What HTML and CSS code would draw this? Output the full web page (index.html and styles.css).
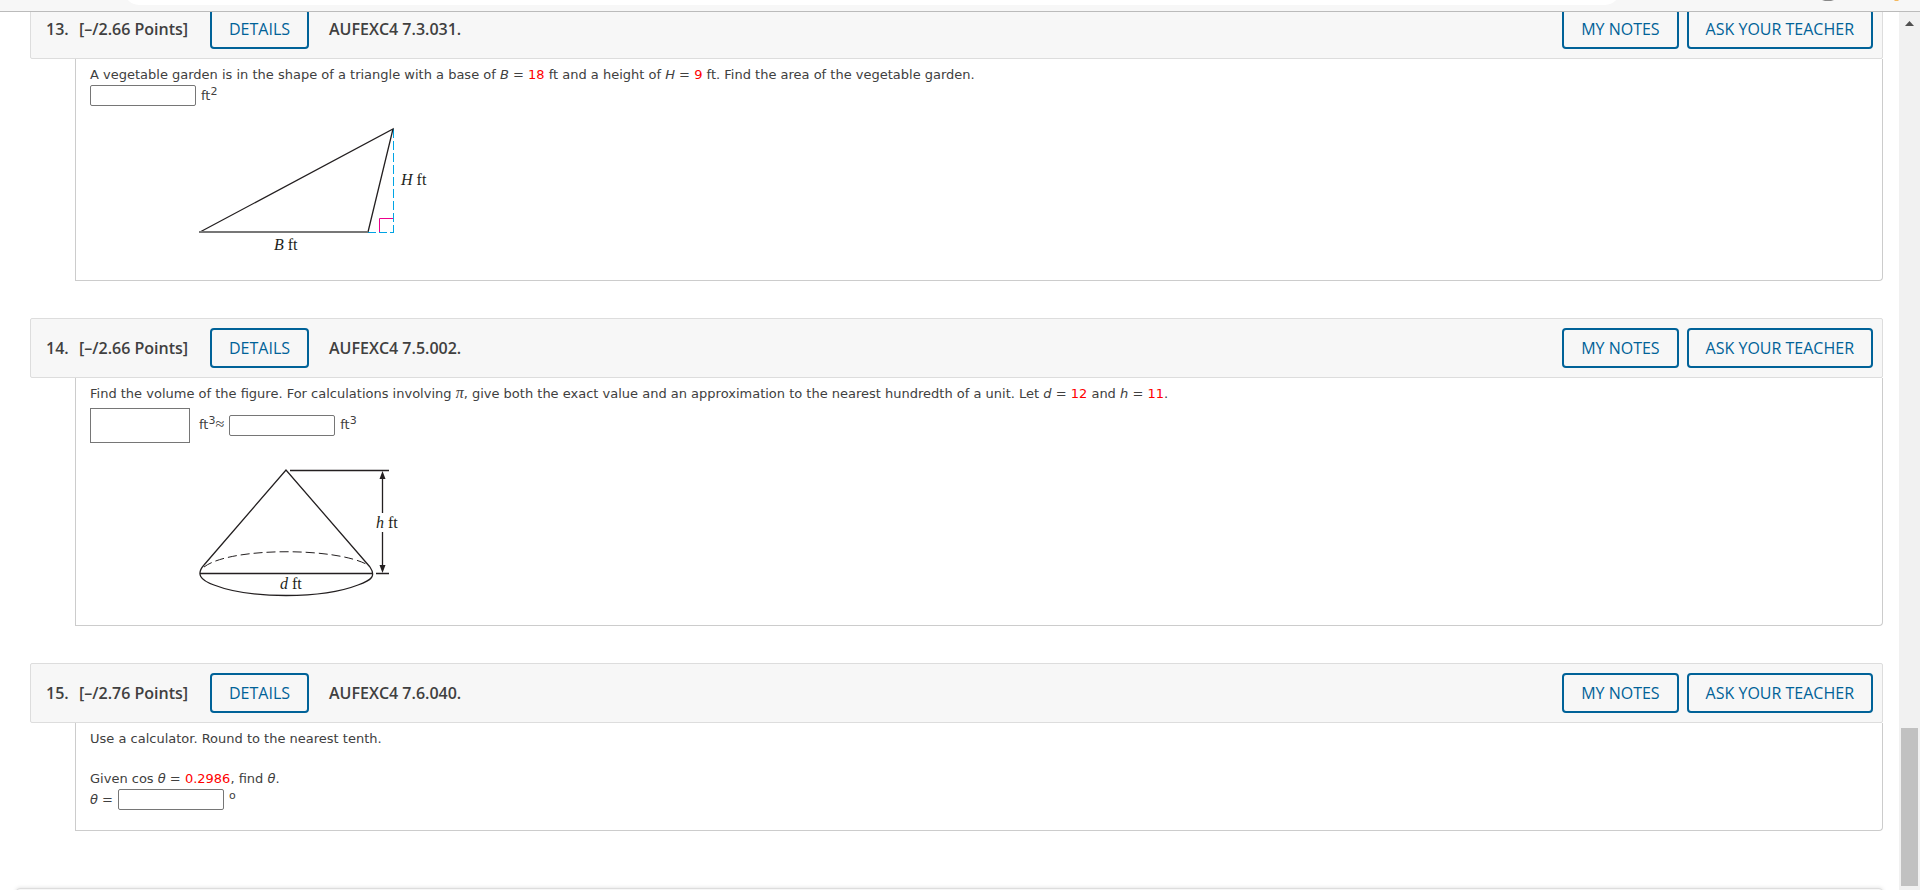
FILE: index.html
```
<!DOCTYPE html>
<html lang="en">
<head>
  <meta charset="UTF-8">
  <meta name="viewport" content="width=device-width, initial-scale=1.0">
  <title>Assignment</title>
  <link rel="stylesheet" href="styles.css">
</head>
<body>
  <div class="toolbar">
    <div class="address-pill"></div>
    <svg class="toolbar-icons" width="80" height="2" viewBox="0 0 80 2">
      <path d="M0 0h12l-3 1h-6z" fill="#888"/>
      <path d="M72 0h5l-1 1h-3z" fill="#f5b95f"/>
    </svg>
  </div>

  <div class="viewport">
    <main class="assignment">
      <section class="question">
        <header class="question-header">
          <span class="number">13.</span>
          <span class="points">[–/2.66 Points]</span>
          <button class="btn details">DETAILS</button>
          <span class="source">AUFEXC4 7.3.031.</span>
          <div class="actions">
            <button class="btn">MY NOTES</button>
            <button class="btn">ASK YOUR TEACHER</button>
          </div>
        </header>
        <div class="question-body">
          <p>A vegetable garden is in the shape of a triangle with a base of <i>B</i> = <span class="value">18</span> ft and a height of <i>H</i> = <span class="value">9</span> ft. Find the area of the vegetable garden.</p>
          <div class="answer-row">
            <input type="text" class="answer" id="area">
            <label for="area">ft<sup>2</sup></label>
          </div>
          <svg class="figure" width="280" height="150" viewBox="0 0 280 150">
            <path class="height" d="M213.500 19V122" stroke-dasharray="9 3"/>
            <path class="height" d="M188 122.500H214" stroke-dasharray="8 3"/>
            <path class="angle" d="M199.500 122V108.500H213"/>
            <path class="line" d="M20 122L213 19L188 122"/>
            <path class="line base" d="M19 122H188"/>
            <text x="221" y="75"><tspan class="var">H</tspan> ft</text>
            <text x="94" y="140"><tspan class="var">B</tspan> ft</text>
          </svg>
        </div>
      </section>

      <section class="question">
        <header class="question-header">
          <span class="number">14.</span>
          <span class="points">[–/2.66 Points]</span>
          <button class="btn details">DETAILS</button>
          <span class="source">AUFEXC4 7.5.002.</span>
          <div class="actions">
            <button class="btn">MY NOTES</button>
            <button class="btn">ASK YOUR TEACHER</button>
          </div>
        </header>
        <div class="question-body">
          <p>Find the volume of the figure. For calculations involving <i class="greek">π</i>, give both the exact value and an approximation to the nearest hundredth of a unit. Let <i>d</i> = <span class="value">12</span> and <i>h</i> = <span class="value">11</span>.</p>
          <div class="answer-row exact-row">
            <input type="text" class="answer exact" id="exact">
            <label for="exact" class="exact-label">ft<sup>3</sup><span class="approx">≈</span></label>
            <input type="text" class="answer" id="approx">
            <label for="approx">ft<sup>3</sup></label>
          </div>
          <svg class="figure" width="280" height="155" viewBox="0 0 280 155">
            <path class="line" d="M24 115L106 20L190 117"/>
            <path class="line" d="M24 115C16 124 20 130 34 135C70 149 142 149 178 135C192 130 196 126 190 117"/>
            <path class="line" d="M20 123.500H193M110 20.500H209M196 123.500H209"/>
            <path class="line hidden-edge" d="M24 117C50 97 156 97 188 115"/>
            <path class="line" d="M202.500 24V63M202.500 82V120"/>
            <path class="arrow" d="M202.500 21L205.500 29H199.500zM202.500 123L205.500 115H199.500z"/>
            <text x="196" y="78"><tspan class="var">h</tspan><tspan dx="4">ft</tspan></text>
            <text x="100" y="139"><tspan class="var">d</tspan><tspan dx="4">ft</tspan></text>
          </svg>
        </div>
      </section>

      <section class="question">
        <header class="question-header">
          <span class="number">15.</span>
          <span class="points">[–/2.76 Points]</span>
          <button class="btn details">DETAILS</button>
          <span class="source">AUFEXC4 7.6.040.</span>
          <div class="actions">
            <button class="btn">MY NOTES</button>
            <button class="btn">ASK YOUR TEACHER</button>
          </div>
        </header>
        <div class="question-body">
          <p>Use a calculator. Round to the nearest tenth.</p>
          <p class="given">Given cos <i>θ</i> = <span class="value">0.2986</span>, find <i>θ</i>.</p>
          <div class="answer-row">
            <label for="theta"><i>θ</i> =</label>
            <input type="text" class="answer" id="theta">
            <span><sup>o</sup></span>
          </div>
        </div>
      </section>

      <div class="submit-panel"></div>
    </main>

    <div class="scrollbar">
      <svg class="scroll-arrow" width="9" height="5" viewBox="0 0 9 5"><path d="M0 5L4.500 0L9 5z"/></svg>
      <div class="thumb"></div>
    </div>
  </div>
</body>
</html>
```
FILE: styles.css
```
* {
  box-sizing: border-box;
}

body {
  margin: 0;
  height: 100vh;
  display: flex;
  flex-direction: column;
  overflow: hidden;
  background-color: #fff;
  color: #404040;
  font-family: Verdana, "DejaVu Sans", sans-serif;
  font-size: 13px;
  line-height: 20px;
}

/* browser edge */
.toolbar {
  flex: none;
  display: flex;
  align-items: flex-start;
  height: 12px;
  padding-left: 124px;
  overflow: hidden;
  background-color: #f7f7f7;
  border-bottom: 1px solid #bbb;
}

.address-pill {
  flex: 1;
  height: 30px;
  margin-top: -25px;
  margin-right: 202px;
  background-color: #fff;
  border-radius: 15px;
}

.toolbar-icons {
  margin-right: 18px;
}

.viewport {
  flex: 1;
  display: flex;
  min-height: 0;
}

/* the list is scrolled so the first header starts above the fold */
.assignment {
  flex: 1;
  overflow: hidden;
  padding: 0 16px 0 30px;
}

.question {
  margin-bottom: 37px;
}

.question:first-child {
  margin-top: -13px;
}

.question-header {
  display: flex;
  align-items: center;
  height: 60px;
  padding: 0 9px 0 15px;
  background-color: #f7f7f7;
  border: 1px solid #ddd;
  border-radius: 2px;
  font-family: "Open Sans", sans-serif;
  font-size: 16px;
  font-weight: 600;
}

.number {
  width: 33px;
}

.points {
  width: 131px;
}

.source {
  margin-left: 20px;
}

.actions {
  display: flex;
  gap: 8px;
  margin-left: auto;
}

.btn {
  height: 40px;
  padding: 0 17px;
  background-color: transparent;
  border: 2px solid #006298;
  border-radius: 4px;
  color: #006298;
  font-family: "Open Sans", sans-serif;
  font-size: 16px;
  font-weight: 500;
  cursor: pointer;
}

.question-body {
  margin-left: 45px;
  padding: 6px 14px 20px;
  border: 1px solid #ccc;
  border-top: 0;
  border-radius: 0 0 4px 0;
}

.question-body p {
  margin: 0;
}

.question-body .given {
  margin-top: 20px;
}

.value {
  color: #f00;
}

.greek {
  font-family: "Liberation Serif", serif;
  font-size: 16px;
  line-height: 1;
}

.answer-row {
  display: flex;
  align-items: center;
  gap: 5px;
  height: 21px;
}

.answer {
  width: 106px;
  height: 21px;
  padding: 1px 2px;
  border: 1px solid #767676;
  border-radius: 2px;
  background-color: #fff;
}

.exact-row {
  height: 42px;
}

.exact {
  width: 100px;
  height: 35px;
  border-radius: 0;
}

.exact-label {
  margin-left: 4px;
}

.approx {
  font-family: "Liberation Serif", serif;
  font-size: 16px;
  line-height: 1;
}

sup {
  font-size: 11px;
  line-height: 0;
}

.figure {
  display: block;
  margin: 4px 0 0 90px;
}

.figure text {
  font-family: "Liberation Serif", serif;
  font-size: 16px;
  fill: #231f20;
}

.var {
  font-style: italic;
}

.line {
  fill: none;
  stroke: #231f20;
  stroke-width: 1.3;
}

.line.base {
  stroke: #777;
  stroke-width: 2;
}

.height {
  fill: none;
  stroke: #00a4e4;
}

.angle {
  fill: none;
  stroke: #ec008c;
}

.line.hidden-edge {
  stroke-width: 1;
  stroke-dasharray: 9 4;
}

.arrow {
  fill: #231f20;
}

.submit-panel {
  height: 60px;
  margin: 57px 0 0 -14px;
  background-color: #f7f7f7;
  border: 1px solid #ddd;
  border-radius: 4px;
  box-shadow: 0 0 4px #ddd;
}

.scrollbar {
  flex: none;
  display: flex;
  flex-direction: column;
  align-items: center;
  justify-content: space-between;
  width: 21px;
  padding: 9px 0 4px;
  background-color: #f1f1f1;
}

.scroll-arrow {
  fill: #505050;
}

.thumb {
  width: 17px;
  height: 158px;
  background-color: #c1c1c1;
}
```
